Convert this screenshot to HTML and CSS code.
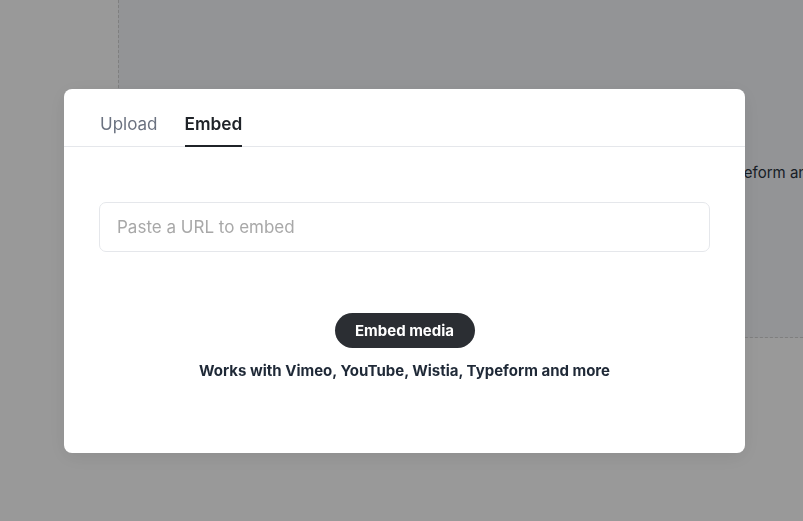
FILE: index.html
```html
<!DOCTYPE html>
<html lang="en">
<head>
<meta charset="utf-8">
<title>Embed</title>
<link rel="stylesheet" href="styles.css">
</head>
<body>
<div class="page">
  <aside class="sidebar"></aside>
  <main class="canvas">
    <p class="bg-text">Works with Vimeo, YouTube, Wistia, Typeform and more</p>
  </main>
</div>
<div class="overlay">
  <div class="modal">
    <div class="tabs">
      <button class="tab">Upload</button>
      <button class="tab active">Embed</button>
    </div>
    <div class="body">
      <input class="url" type="text" placeholder="Paste a URL to embed">
      <button class="primary">Embed media</button>
      <p class="hint">Works with Vimeo, YouTube, Wistia, Typeform and more</p>
    </div>
  </div>
</div>
</body>
</html>
```
FILE: styles.css
```css
* { box-sizing: border-box; }
html, body { margin: 0; height: 100%; }
body {
  background: #ffffff;
  font-family: Inter, "Noto Sans", sans-serif;
  overflow: hidden;
}
.page {
  display: flex;
  height: 100%;
  align-items: flex-start;
}
.sidebar {
  width: 118px;
  flex: none;
}
.canvas {
  flex: 1;
  min-width: 0;
  height: 338px;
  background: #f5f7fa;
  border-left: 1px dashed #d4d4d4;
  border-bottom: 1px dashed #d4d4d4;
  padding-top: 163px;
  overflow: hidden;
}
.bg-text {
  margin: 0 0 0 340px;
  white-space: nowrap;
  font-size: 15px;
  color: #2a3440;
}
.overlay {
  position: fixed;
  inset: 0;
  background: rgba(0, 0, 0, 0.4);
  padding: 89px 0 0 64px;
}
.modal {
  width: 681px;
  height: 364px;
  background: #fff;
  border-radius: 8px;
  box-shadow: 0 4px 20px rgba(0, 0, 0, 0.08);
  overflow: hidden;
}
.tabs {
  display: flex;
  gap: 27px;
  padding: 0 36px;
  height: 58px;
  border-bottom: 1px solid #e5e7eb;
  align-items: stretch;
}
.tab {
  border: 0;
  background: none;
  padding: 23px 0 0;
  margin: 0;
  font-family: inherit;
  font-size: 17px;
  color: #6b7280;
  border-bottom: 2px solid transparent;
  margin-bottom: -1px;
  line-height: 24px;
  display: flex;
  align-items: flex-start;
}
.tab.active {
  color: #1f2328;
  font-weight: 600;
  font-size: 17.3px;
  border-bottom-color: #1f2328;
}
.body {
  display: flex;
  flex-direction: column;
  align-items: center;
  padding: 55px 35px 0;
}
.url {
  width: 100%;
  height: 50px;
  border: 1px solid #e5e7eb;
  border-radius: 7px;
  padding: 0 17px;
  font-family: inherit;
  font-size: 17px;
  color: #1f2328;
  outline: none;
}
.url::placeholder { color: #a8a8a8; }
.primary {
  margin-top: 61px;
  height: 35px;
  padding: 0 20px;
  border: 0;
  border-radius: 18px;
  background: #2b2e33;
  color: #fff;
  font-family: inherit;
  font-size: 15px;
  font-weight: 700;
  width: 140px;
}
.hint {
  margin: 13px 0 0;
  font-size: 15px;
  font-weight: 700;
  color: #1f2937;
  line-height: 20px;
}
```
